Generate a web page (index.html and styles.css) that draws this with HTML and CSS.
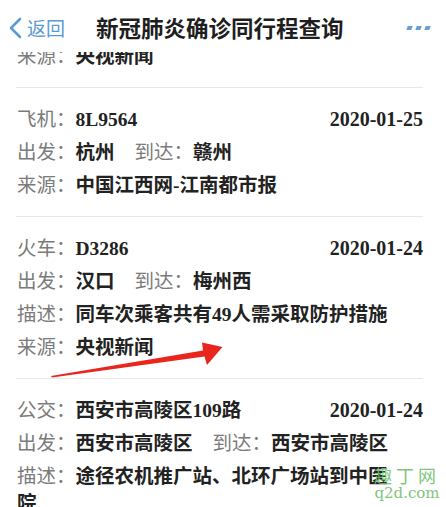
FILE: index.html
```html
<!DOCTYPE html>
<html lang="zh">
<head>
    <meta charset="UTF-8">
    <meta name="viewport" content="width=device-width, initial-scale=1.0">
    <title>新冠肺炎确诊同行程查询</title>
    <link rel="stylesheet" href="styles.css">
</head>
<body>
    <header class="topbar">
        <a class="back" href="#">
            <svg class="chevron" width="14" height="22" viewBox="0 0 14 22">
                <path d="M12 2 L3 11 L12 20" fill="none" stroke="#5b9bd3" stroke-width="2.6" stroke-linecap="round" stroke-linejoin="round"/>
            </svg>
            <span>返回</span>
        </a>
        <h1>新冠肺炎确诊同行程查询</h1>
        <div class="more"><i></i><i></i><i></i></div>
    </header>

    <main class="list">
        <div class="trip trip-cut">
            <p class="row"><span class="label">来源：</span><b>央视新闻</b></p>
        </div>

        <div class="trip">
            <p class="row head"><span><span class="label">飞机：</span><b>8L9564</b></span><b class="date">2020-01-25</b></p>
            <p class="row"><span class="label">出发：</span><b>杭州</b><span class="label gap">到达：</span><b>赣州</b></p>
            <p class="row"><span class="label">来源：</span><b>中国江西网-江南都市报</b></p>
        </div>

        <div class="trip">
            <p class="row head"><span><span class="label">火车：</span><b>D3286</b></span><b class="date">2020-01-24</b></p>
            <p class="row"><span class="label">出发：</span><b>汉口</b><span class="label gap">到达：</span><b>梅州西</b></p>
            <p class="row"><span class="label">描述：</span><b>同车次乘客共有49人需采取防护措施</b></p>
            <p class="row"><span class="label">来源：</span><b>央视新闻</b></p>
        </div>

        <div class="trip">
            <p class="row head"><span><span class="label">公交：</span><b>西安市高陵区109路</b></span><b class="date">2020-01-24</b></p>
            <p class="row"><span class="label">出发：</span><b>西安市高陵区</b><span class="label gap">到达：</span><b>西安市高陵区</b></p>
            <p class="row wrap"><span class="label">描述：</span><b>途径农机推广站、北环广场站到中医院</b></p>
        </div>
    </main>

    <!-- red marker drawn over the screenshot -->
    <svg class="arrow" width="446" height="507" viewBox="0 0 446 507">
        <path d="M51 376 L203 350.5 L202 342.5 L222.5 347 L207 365 L204.5 356.5 L52 377.5 Z" fill="#e8261e"/>
    </svg>

    <div class="watermark">
        <span class="wm-name">趣丁网</span>
        <span class="wm-url">q2d.com</span>
    </div>
</body>
</html>
```

FILE: styles.css
```css
html, body {
    margin: 0;
    padding: 0;
}
body {
    width: 446px;
    height: 507px;
    overflow: hidden;
    position: relative;
    background: #fff;
    color: #222;
    font-family: "Liberation Serif", "Noto Sans CJK SC", serif;
}
.topbar {
    position: relative;
    z-index: 1;
    height: 52px;
    background: #fff;
    display: flex;
    align-items: center;
    padding: 0 16px 0 8px;
    box-sizing: border-box;
}
.back {
    display: flex;
    align-items: center;
    gap: 5px;
    color: #5b9bd3;
    text-decoration: none;
    font-family: "Noto Sans CJK SC", sans-serif;
    font-size: 19px;
    margin-top: 3px;
}
.topbar h1 {
    margin: 2px 0 0 31px;
    font-family: "Noto Sans CJK SC", sans-serif;
    font-size: 22.5px;
    font-weight: 600;
    color: #1e1e1e;
}
.more {
    margin-left: auto;
    margin-top: 3px;
    display: flex;
    gap: 4px;
}
.more i {
    display: block;
    width: 5px;
    height: 4px;
    background: #6a9fd4;
    transform: skewX(-20deg);
}
.list {
    margin: -9.5px 23px 0 16px;
}
.trip {
    display: flex;
    flex-direction: column;
    gap: 6px;
    padding: 18px 0 17px 1px;
    border-bottom: 1px solid #e8e8e8;
}
.trip-cut {
    padding: 0 0 17px 1px;
}
.row {
    margin: 0;
    font-size: 19.5px;
    line-height: 27px;
}
.row b {
    font-weight: 700;
    color: #222;
}
.head {
    display: flex;
    justify-content: space-between;
}
.label {
    color: #7b7b7b;
}
.gap {
    margin-left: 20px;
}
.wrap {
    padding-right: 24px;
}
.date {
    font-size: 20px;
}
.arrow {
    position: absolute;
    top: 0;
    left: 0;
    pointer-events: none;
}
.watermark {
    position: absolute;
    right: 6px;
    bottom: 6px;
    display: flex;
    flex-direction: column;
    align-items: center;
    color: #72c070;
    line-height: 1;
    opacity: 0.9;
}
.wm-name {
    font-family: "Noto Sans CJK SC", sans-serif;
    font-size: 18px;
    letter-spacing: 4px;
}
.wm-url {
    font-family: "DejaVu Serif", serif;
    font-size: 15px;
    margin-top: 2px;
}
```
